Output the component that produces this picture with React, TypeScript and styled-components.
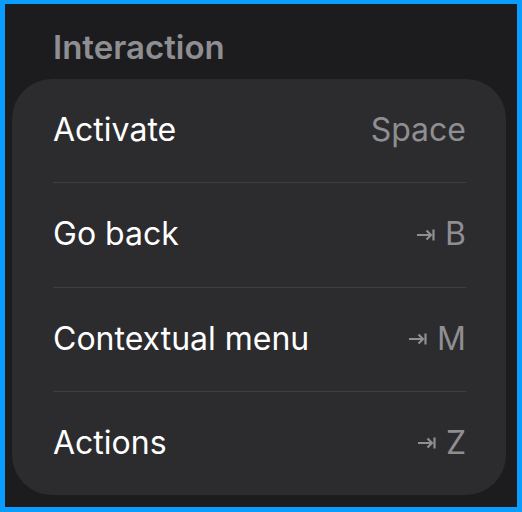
import React from "react";
import styled, { createGlobalStyle } from "styled-components";

const Global = createGlobalStyle`
  html, body { margin: 0; padding: 0; background: #1c1c1e; }
  body { font-family: Inter, "Noto Sans", sans-serif; -webkit-font-smoothing: antialiased; }
`;

const Frame = styled.div`
  box-sizing: border-box;
  width: 522px;
  height: 512px;
  border: 5px solid #0a9dff;
  border-top-width: 4px;
  background: #1c1c1e;
  display: flex;
  flex-direction: column;
  padding: 0 11px 12px 7px;
`;

const Header = styled.div`
  height: 75px;
  display: flex;
  align-items: center;
  padding: 10px 0 0 41px;
  box-sizing: border-box;
  color: #8e8e93;
  font-size: 33px;
  font-weight: 600;
  letter-spacing: 0;
`;

const Card = styled.div`
  background: #2c2c2e;
  border-radius: 40px;
  display: flex;
  flex-direction: column;
  padding: 0 40px 0 41px;
  flex: 1;
`;

const Row = styled.div<{ $last?: boolean }>`
  flex: 1;
  display: flex;
  align-items: center;
  justify-content: space-between;
  border-bottom: ${(p) => (p.$last ? "none" : "1.5px solid #3e3e41")};
  padding-bottom: 2px;
`;

const Label = styled.span`
  color: #ffffff;
  font-size: 32px;
  font-weight: 400;
`;

const Shortcut = styled.span`
  color: #8e8e93;
  font-size: 32px;
  display: flex;
  align-items: center;
  gap: 10px;
`;

const TabGlyph = styled.svg`
  width: 19px;
  height: 14px;
  margin-top: 2px;
`;

const Tab = () => (
  <TabGlyph viewBox="0 0 19 14">
    <path d="M1 7h14M10.5 2.5L15 7l-4.5 4.5M17.5 1.5v11" stroke="#8e8e93" strokeWidth="2.2" fill="none" />
  </TabGlyph>
);

const rows: { label: string; key: string; tab: boolean }[] = [
  { label: "Activate", key: "Space", tab: false },
  { label: "Go back", key: "B", tab: true },
  { label: "Contextual menu", key: "M", tab: true },
  { label: "Actions", key: "Z", tab: true },
];

export default function App() {
  return (
    <>
      <Global />
      <Frame>
        <Header>Interaction</Header>
        <Card>
          {rows.map((r, i) => (
            <Row key={r.label} $last={i === rows.length - 1}>
              <Label>{r.label}</Label>
              <Shortcut>
                {r.tab && <Tab />}
                {r.key}
              </Shortcut>
            </Row>
          ))}
        </Card>
      </Frame>
    </>
  );
}
